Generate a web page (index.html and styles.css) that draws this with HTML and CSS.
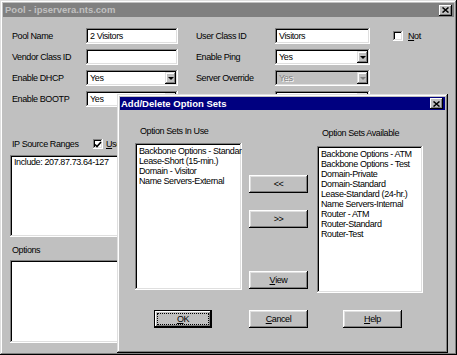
FILE: index.html
```html
<!DOCTYPE html>
<html lang="en">
<head>
    <meta charset="UTF-8">
    <title>Pool - ipservera.nts.com</title>
    <link rel="stylesheet" href="styles.css">
</head>
<body>
    <div class="window pool">
        <div class="titlebar inactive">
            <span>Pool - ipservera.nts.com</span>
            <span class="close"><svg width="7" height="6" viewBox="0 0 7 6"><path d="M0.5 0.5L6.5 5.5M6.5 0.5L0.5 5.5" stroke="#000" stroke-width="1.5"/></svg></span>
        </div>

        <div class="pool-body">
            <div class="fields">
                <span class="label">Pool Name</span>
                <div class="field w-left">2 Visitors</div>
                <span class="label">User Class ID</span>
                <div class="field w-right">Visitors</div>
                <label class="check"><span class="box"></span><span><u>N</u>ot</span></label>

                <span class="label">Vendor Class ID</span>
                <div class="field w-left"></div>
                <span class="label">Enable Ping</span>
                <div class="field select w-right"><span class="value">Yes</span><span class="drop"></span></div>
                <span></span>

                <span class="label">Enable DHCP</span>
                <div class="field select w-left"><span class="value">Yes</span><span class="drop"></span></div>
                <span class="label">Server Override</span>
                <div class="field select w-right disabled"><span class="value">Yes</span><span class="drop"></span></div>
                <span></span>

                <span class="label">Enable BOOTP</span>
                <div class="field select w-left"><span class="value">Yes</span><span class="drop"></span></div>
                <span class="label"></span>
                <div class="field select w-right"><span class="value"></span><span class="drop"></span></div>
                <span></span>
            </div>

            <div class="range-row">
                <span class="range-label">IP Source Ranges</span>
                <label class="check"><span class="box checked"><svg width="8" height="7" viewBox="0 0 8 7"><path d="M1 3.5L3 5.5L7 1" fill="none" stroke="#000" stroke-width="1.6"/></svg></span><span><u>U</u>se</span></label>
            </div>
            <div class="listbox range-list">Include: 207.87.73.64-127</div>

            <div class="group-label">Options</div>
            <div class="listbox options-list"></div>
        </div>

        <!-- dialog di atas jendela Pool -->
        <div class="window dialog">
            <div class="titlebar">
                <span>Add/Delete Option Sets</span>
                <span class="close"><svg width="7" height="6" viewBox="0 0 7 6"><path d="M0.5 0.5L6.5 5.5M6.5 0.5L0.5 5.5" stroke="#000" stroke-width="1.5"/></svg></span>
            </div>

            <div class="sets">
                <div class="set-col in-use">
                    <div class="set-label">Option Sets In Use</div>
                    <div class="listbox set-list">
                        <div>Backbone Options - Standard</div>
                        <div>Lease-Short (15-min.)</div>
                        <div>Domain - Visitor</div>
                        <div>Name Servers-External</div>
                    </div>
                </div>

                <div class="moves">
                    <button class="btn add">&lt;&lt;</button>
                    <button class="btn remove">&gt;&gt;</button>
                    <button class="btn view"><u>V</u>iew</button>
                </div>

                <div class="set-col available">
                    <div class="set-label">Option Sets Available</div>
                    <div class="listbox set-list">
                        <div>Backbone Options - ATM</div>
                        <div>Backbone Options - Test</div>
                        <div>Domain-Private</div>
                        <div>Domain-Standard</div>
                        <div>Lease-Standard (24-hr.)</div>
                        <div>Name Servers-Internal</div>
                        <div>Router - ATM</div>
                        <div>Router-Standard</div>
                        <div>Router-Test</div>
                    </div>
                </div>
            </div>

            <div class="dialog-buttons">
                <button class="btn default"><u>O</u>K</button>
                <button class="btn cancel"><u>C</u>ancel</button>
                <button class="btn help"><u>H</u>elp</button>
            </div>
        </div>
    </div>
</body>
</html>
```

FILE: styles.css
```css
/* Reset dasar */
* {
    margin: 0;
    padding: 0;
    box-sizing: border-box;
}

body {
    font-family: 'Liberation Sans', Arial, sans-serif;
    font-size: 9px;
    line-height: 10px;
    letter-spacing: -0.4px;
    color: #000;
    background-color: #c0c0c0;
}

u {
    text-decoration: underline;
}

/* Jendela gaya Windows 95 */
.window {
    background-color: #c0c0c0;
    padding: 3px;
    box-shadow: inset -1px -1px #000, inset 1px 1px #dfdfdf,
                inset -2px -2px #808080, inset 2px 2px #fff;
}

.pool {
    position: relative;
    width: 457px;
    height: 355px;
}

.titlebar {
    display: flex;
    align-items: center;
    justify-content: space-between;
    height: 14px;
    padding: 0 2px 0 2px;
    background-color: #000080;
    color: #fff;
    font-size: 9.5px;
    font-weight: bold;
    letter-spacing: 0;
}

.titlebar.inactive {
    background-color: #808080;
    color: #c0c0c0;
}

.close {
    display: flex;
    align-items: center;
    justify-content: center;
    width: 13px;
    height: 11px;
    background-color: #c0c0c0;
    box-shadow: inset -1px -1px #000, inset 1px 1px #fff,
                inset -2px -2px #808080;
}

/* Isi jendela Pool */
.pool-body {
    padding: 11px 0 0 7px;
}

.fields {
    display: grid;
    grid-template-columns: 74px 110px 79px 118px auto;
    grid-auto-rows: 16px;
    row-gap: 5px;
    align-items: center;
    margin-left: 2px;
}

.field {
    height: 16px;
    padding: 3px 4px;
    background-color: #fff;
    white-space: nowrap;
    overflow: hidden;
    box-shadow: inset -1px -1px #fff, inset 1px 1px #808080,
                inset -2px -2px #dfdfdf, inset 2px 2px #000;
}

.w-left {
    width: 92px;
}

.w-right {
    width: 95px;
}

.field.select {
    display: flex;
    align-items: center;
    padding: 2px 2px 2px 4px;
}

.select .value {
    flex: 1;
}

.drop {
    display: flex;
    align-items: center;
    justify-content: center;
    width: 11px;
    height: 12px;
    background-color: #c0c0c0;
    box-shadow: inset -1px -1px #000, inset 1px 1px #dfdfdf,
                inset -2px -2px #808080, inset 2px 2px #fff;
}

.drop::after {
    content: "";
    border-left: 3px solid transparent;
    border-right: 3px solid transparent;
    border-top: 3px solid #000;
}

.field.disabled {
    background-color: #c0c0c0;
    color: #808080;
    text-shadow: 1px 1px #fff;
}

.disabled .drop::after {
    border-top-color: #808080;
}

.check {
    display: flex;
    align-items: center;
    gap: 5px;
}

.box {
    display: flex;
    align-items: center;
    justify-content: center;
    width: 10px;
    height: 10px;
    background-color: #fff;
    box-shadow: inset -1px -1px #fff, inset 1px 1px #808080,
                inset -2px -2px #dfdfdf, inset 2px 2px #000;
}

/* Rentang sumber IP dan opsi */
.range-row {
    display: flex;
    align-items: center;
    height: 12px;
    margin: 31px 0 0 2px;
}

.range-label {
    width: 81px;
}

.range-row .check {
    gap: 3px;
}

.listbox {
    background-color: #fff;
    padding: 2px 4px;
    white-space: nowrap;
    overflow: hidden;
    box-shadow: inset -1px -1px #fff, inset 1px 1px #808080,
                inset -2px -2px #dfdfdf, inset 2px 2px #000;
}

.range-list {
    width: 360px;
    height: 82px;
    margin-top: 5px;
}

.group-label {
    height: 12px;
    line-height: 12px;
    margin: 7px 0 0 2px;
}

.options-list {
    width: 360px;
    height: 83px;
    margin-top: 4px;
}

/* Dialog Add/Delete Option Sets */
.dialog {
    position: absolute;
    left: 117px;
    top: 94px;
    width: 331px;
    height: 259px;
}

.dialog .titlebar {
    height: 13px;
    padding-left: 1px;
}

.sets {
    display: flex;
    margin-top: 16px;
    padding-left: 15px;
}

.set-col {
    display: flex;
    flex-direction: column;
}

.in-use {
    width: 107px;
}

.available {
    width: 106px;
    margin-left: 9px;
    padding-top: 2px;
}

.set-label {
    height: 10px;
    padding-left: 5px;
}

.in-use .set-list {
    margin-top: 7px;
}

.available .set-list {
    margin-top: 8px;
}

.set-list {
    height: 147px;
    padding: 3px 2px 0 4px;
}

.moves {
    display: flex;
    flex-direction: column;
    width: 59px;
    margin-left: 7px;
}

.btn {
    display: flex;
    align-items: center;
    justify-content: center;
    width: 59px;
    height: 18px;
    border: none;
    background-color: #c0c0c0;
    font-family: inherit;
    font-size: 9px;
    letter-spacing: -0.4px;
    color: #000;
    box-shadow: inset -1px -1px #000, inset 1px 1px #fff,
                inset -2px -2px #808080, inset 2px 2px #dfdfdf;
}

.moves .add {
    margin-top: 49px;
}

.moves .remove {
    margin-top: 17px;
}

.moves .view {
    margin-top: 43px;
}

.dialog-buttons {
    display: flex;
    margin-top: 17px;
    padding-left: 34px;
}

.btn.default {
    width: 58px;
    outline: 1px dotted #000;
    outline-offset: -4px;
    box-shadow: inset 0 0 0 1px #000, inset -2px -2px #000,
                inset 2px 2px #fff, inset -3px -3px #808080;
}

.btn.cancel {
    margin-left: 37px;
}

.btn.help {
    margin-left: 35px;
}
```
